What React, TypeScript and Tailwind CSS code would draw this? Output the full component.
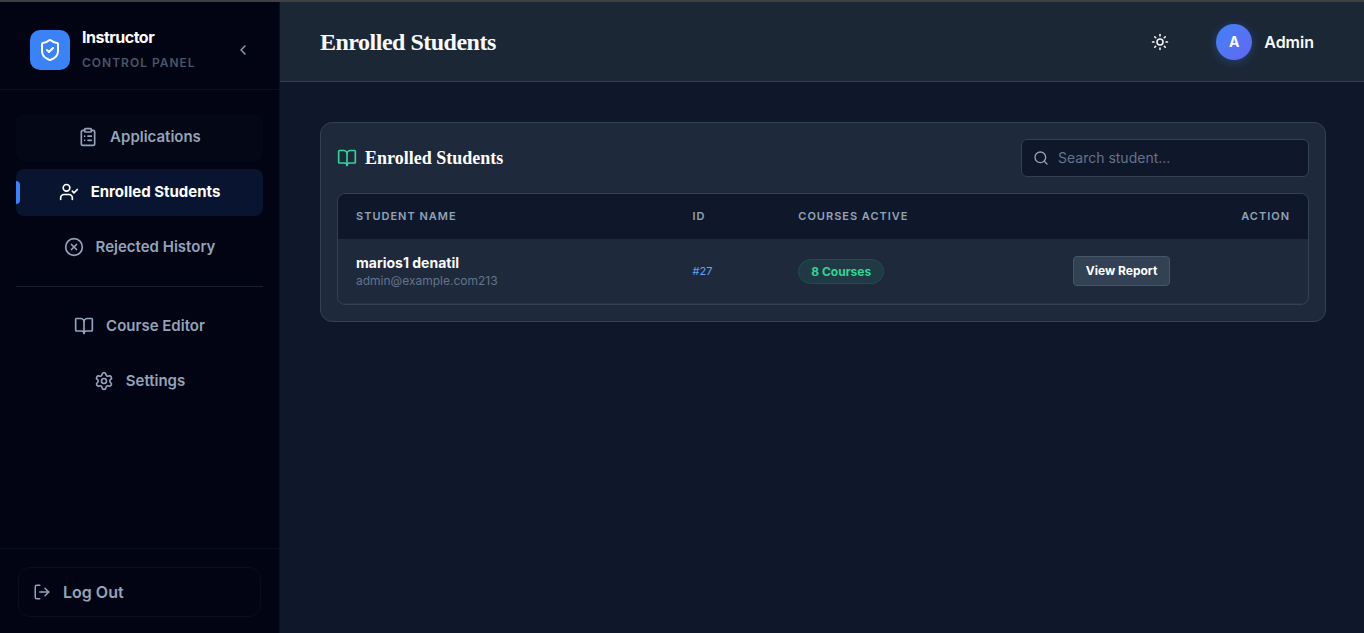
import { useState } from "react";
import {
  BookOpen,
  ChevronLeft,
  CircleX,
  ClipboardList,
  LogOut,
  Search,
  Settings,
  ShieldCheck,
  Sun,
  UserCheck,
  type LucideIcon,
} from "lucide-react";
import clsx from "clsx";

interface NavItem {
  label: string;
  icon: LucideIcon;
  hovered?: boolean;
}

interface Student {
  id: number;
  name: string;
  email: string;
  courses: number;
}

const STUDENT_LINKS: NavItem[] = [
  { label: "Applications", icon: ClipboardList, hovered: true },
  { label: "Enrolled Students", icon: UserCheck },
  { label: "Rejected History", icon: CircleX },
];

const GENERAL_LINKS: NavItem[] = [
  { label: "Course Editor", icon: BookOpen },
  { label: "Settings", icon: Settings },
];

const STUDENTS: Student[] = [
  {
    id: 27,
    name: "marios1 denatil",
    email: "admin@example.com213",
    courses: 8,
  },
];

interface NavButtonProps {
  item: NavItem;
  active: boolean;
  onSelect: (label: string) => void;
}

const NavButton = ({ item, active, onSelect }: NavButtonProps) => {
  const Icon = item.icon;

  return (
    <button
      type="button"
      onClick={() => onSelect(item.label)}
      className={clsx(
        "relative flex h-[47px] w-full items-center justify-center gap-3 rounded-lg pb-px text-[15px] leading-6",
        active
          ? "bg-[#091430] font-bold text-white"
          : "font-semibold text-[#94a3b8]",
        !active && item.hovered && "bg-[#040716]"
      )}
    >
      {active && (
        <span className="absolute top-3 left-0 h-[23px] w-1 rounded-r bg-[#3b82f6]" />
      )}
      <Icon size={20} />
      {item.label}
    </button>
  );
};

const Sidebar = () => {
  const [current, setCurrent] = useState("Enrolled Students");

  return (
    <aside className="flex w-[280px] shrink-0 flex-col border-r border-[#0b1020] bg-[#020414]">
      <div className="flex h-22 items-center border-b border-[#0b1020] pt-2 pr-7 pl-[30px]">
        <div className="flex size-10 items-center justify-center rounded-[10px] bg-[#3b82f6] text-white">
          <ShieldCheck size={24} />
        </div>
        <div className="ml-3 flex flex-1 flex-col gap-1.5">
          <span className="text-base leading-5 font-bold tracking-[-0.5px] text-white">
            Instructor
          </span>
          <span className="text-xs leading-5 font-semibold tracking-[1px] text-[#4b5563] uppercase">
            Control Panel
          </span>
        </div>
        <button
          type="button"
          aria-label="Collapse sidebar"
          className="text-[#94a3b8]"
        >
          <ChevronLeft size={16} />
        </button>
      </div>

      <nav className="flex flex-1 flex-col gap-2 px-4 pt-6">
        {STUDENT_LINKS.map((item) => (
          <NavButton
            key={item.label}
            item={item}
            active={item.label === current}
            onSelect={setCurrent}
          />
        ))}
        <hr className="mt-[7px] mb-2 border-[#1a2030]" />
        {GENERAL_LINKS.map((item) => (
          <NavButton
            key={item.label}
            item={item}
            active={item.label === current}
            onSelect={setCurrent}
          />
        ))}
      </nav>

      <div className="border-t border-[#0b1020] px-[18px] pt-[18px] pb-4">
        <button
          type="button"
          className="flex h-[50px] w-full items-center gap-3 rounded-xl border border-[#0a0d1c] px-[14px] text-base font-semibold text-[#94a3b8]"
        >
          <LogOut size={18} />
          Log Out
        </button>
      </div>
    </aside>
  );
};

const StudentTable = ({ students }: { students: Student[] }) => {
  return (
    <div className="overflow-hidden rounded-lg border border-[#334155]">
      <table className="w-full table-fixed text-left">
        <thead className="bg-[#0f172a] text-[11px] tracking-[1px] text-[#94a3b8] uppercase">
          <tr className="h-[45px] border-b border-[#1e293b]">
            <th className="w-[34.7%] px-[18px] font-semibold">Student Name</th>
            <th className="w-[10.9%] px-[18px] font-semibold">ID</th>
            <th className="w-[28.3%] px-[18px] font-semibold">
              Courses Active
            </th>
            <th className="px-[18px] text-right font-semibold">Action</th>
          </tr>
        </thead>
        <tbody>
          {students.map((student) => (
            <tr key={student.id} className="h-16 border-b border-[#263346]">
              <td className="px-[18px]">
                <div className="pt-px text-sm leading-[18px] font-bold text-[#f8fafc]">
                  {student.name}
                </div>
                <div className="text-xs leading-[18px] text-[#64748b]">
                  {student.email}
                </div>
              </td>
              <td className="px-[18px] text-[11px] text-[#60a5fa]">
                #{student.id}
              </td>
              <td className="px-[18px]">
                <span className="inline-flex h-[25px] items-center rounded-full border border-[#1d4f50] bg-[#1f3a44] px-3 text-xs font-bold text-[#34d399]">
                  {student.courses} Courses
                </span>
              </td>
              <td className="px-[18px]">
                <button
                  type="button"
                  className="flex h-[30px] items-center rounded border border-[#475569] bg-[#334155] px-3 text-xs font-bold text-white"
                >
                  View Report
                </button>
              </td>
            </tr>
          ))}
        </tbody>
      </table>
    </div>
  );
};

const App = () => {
  const [query, setQuery] = useState("");

  const visible = STUDENTS.filter((student) =>
    student.name.toLowerCase().includes(query.toLowerCase())
  );

  return (
    <div className="flex min-h-screen border-t-2 border-[#404040] bg-[#0f172a] font-['Inter',sans-serif]">
      <Sidebar />

      <div className="flex min-w-0 flex-1 flex-col">
        <header className="flex h-20 items-center justify-between border-b border-[#334155] bg-[#1c2736] pr-[50px] pl-10">
          <h1 className="font-['Liberation_Serif',serif] text-2xl font-bold tracking-[-0.5px] text-[#f8fafc]">
            Enrolled Students
          </h1>
          <div className="flex items-center">
            <button
              type="button"
              aria-label="Toggle theme"
              className="mr-[47px] text-[#f8fafc]"
            >
              <Sun size={18} />
            </button>
            <div className="flex size-9 items-center justify-center rounded-full bg-linear-to-br from-[#3b82f6] to-[#6366f1] text-sm font-bold text-[#f8fafc] shadow-[0_2px_10px_rgba(59,130,246,0.3)]">
              A
            </div>
            <span className="ml-3 text-base font-semibold text-[#f8fafc]">
              Admin
            </span>
          </div>
        </header>

        <main className="py-10 pr-[38px] pl-10">
          <section className="rounded-xl border border-[#334155] bg-[#1e293b] p-4">
            <div className="mb-4 flex items-center justify-between">
              <h2 className="flex items-center gap-2 font-['Liberation_Serif',serif] text-lg font-bold text-white">
                <BookOpen size={20} className="text-[#34d399]" />
                Enrolled Students
              </h2>
              <label className="flex h-[38px] w-72 items-center gap-[9px] rounded-md border border-[#334155] bg-[#0f172a] px-[11px]">
                <Search size={16} className="text-[#94a3b8]" />
                <input
                  type="text"
                  aria-label="Search student"
                  placeholder="Search student..."
                  value={query}
                  onChange={(e) => setQuery(e.target.value)}
                  className="min-w-0 flex-1 bg-transparent text-sm text-[#f8fafc] outline-none placeholder:text-[#64748b]"
                />
              </label>
            </div>
            <StudentTable students={visible} />
          </section>
        </main>
      </div>
    </div>
  );
};

export default App;
